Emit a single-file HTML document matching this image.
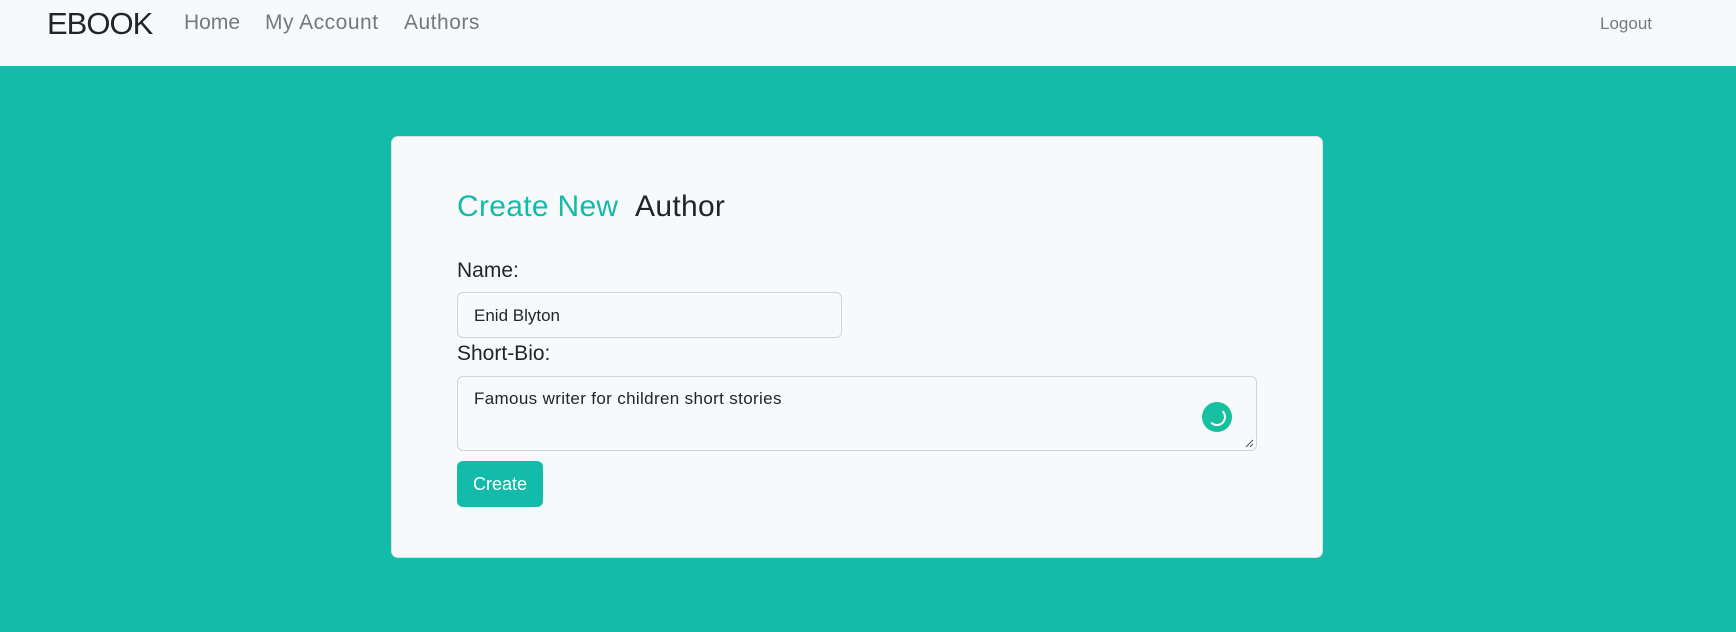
<!DOCTYPE html>
<html><head><style>
*{box-sizing:border-box;margin:0;padding:0}
body{width:1736px;height:632px;background:#12bbaa;font-family:"Liberation Sans",sans-serif;position:relative;overflow:hidden}
.nav{position:absolute;left:0;top:0;width:1736px;height:66px;background:#f8f9fa}
.abs{position:absolute;white-space:nowrap}
.card{position:absolute;left:391px;top:136px;width:932px;height:422px;background:#f8f9fa;border-radius:7px;border:1px solid #dde0e3}
input,.ta{position:absolute;background:#f8f9fa;border:1px solid #ced4da;border-radius:6px}
</style></head><body>
<div class="nav">
<div class="abs" style="left:47px;top:6px;font-size:31px;color:#212529;letter-spacing:-1px">EBOOK</div>
<div class="abs" style="left:184px;top:11px;font-size:21px;color:#74797e">Home</div>
<div class="abs" style="left:265px;top:11px;font-size:21px;color:#74797e;letter-spacing:0.5px">My Account</div>
<div class="abs" style="left:404px;top:11px;font-size:21px;color:#74797e;letter-spacing:0.5px">Authors</div>
<div class="abs" style="left:1600px;top:14px;font-size:17px;color:#74797e">Logout</div>
</div>
<div class="card">
<div class="abs" style="left:65px;top:53px;font-size:30px;color:#12bbaa;letter-spacing:0.3px">Create New <span style="color:#212529;margin-left:8px">Author</span></div>
<div class="abs" style="left:65px;top:122px;font-size:21px;color:#212529">Name:</div>
<div class="ta" style="left:65px;top:155px;width:385px;height:46px"><span class="abs" style="left:16px;top:13px;font-size:17px;color:#212529">Enid Blyton</span></div>
<div class="abs" style="left:65px;top:205px;font-size:21px;color:#212529">Short-Bio:</div>
<div class="ta" style="left:65px;top:239px;width:800px;height:75px"><span class="abs" style="left:16px;top:12px;font-size:17px;color:#212529;letter-spacing:0.35px">Famous writer for children short stories</span>
<div class="abs" style="left:744px;top:25px;width:30px;height:30px;border-radius:50%;background:#17c1a0"></div>
<div class="abs" style="left:750px;top:31px;width:18px;height:18px;border-radius:50%;border:2px solid transparent;border-right-color:#fff;border-bottom-color:#fff"></div>
<svg class="abs" style="left:786px;top:61px" width="10" height="10"><path d="M9 2L2 9M9 6L6 9" stroke="#555" stroke-width="1"/></svg>
</div>
<div class="abs" style="left:65px;top:324px;width:86px;height:46px;background:#12bbaa;border-radius:6px;color:#fff;font-size:18px;text-align:center;line-height:46px">Create</div>
</div>
</body></html>
